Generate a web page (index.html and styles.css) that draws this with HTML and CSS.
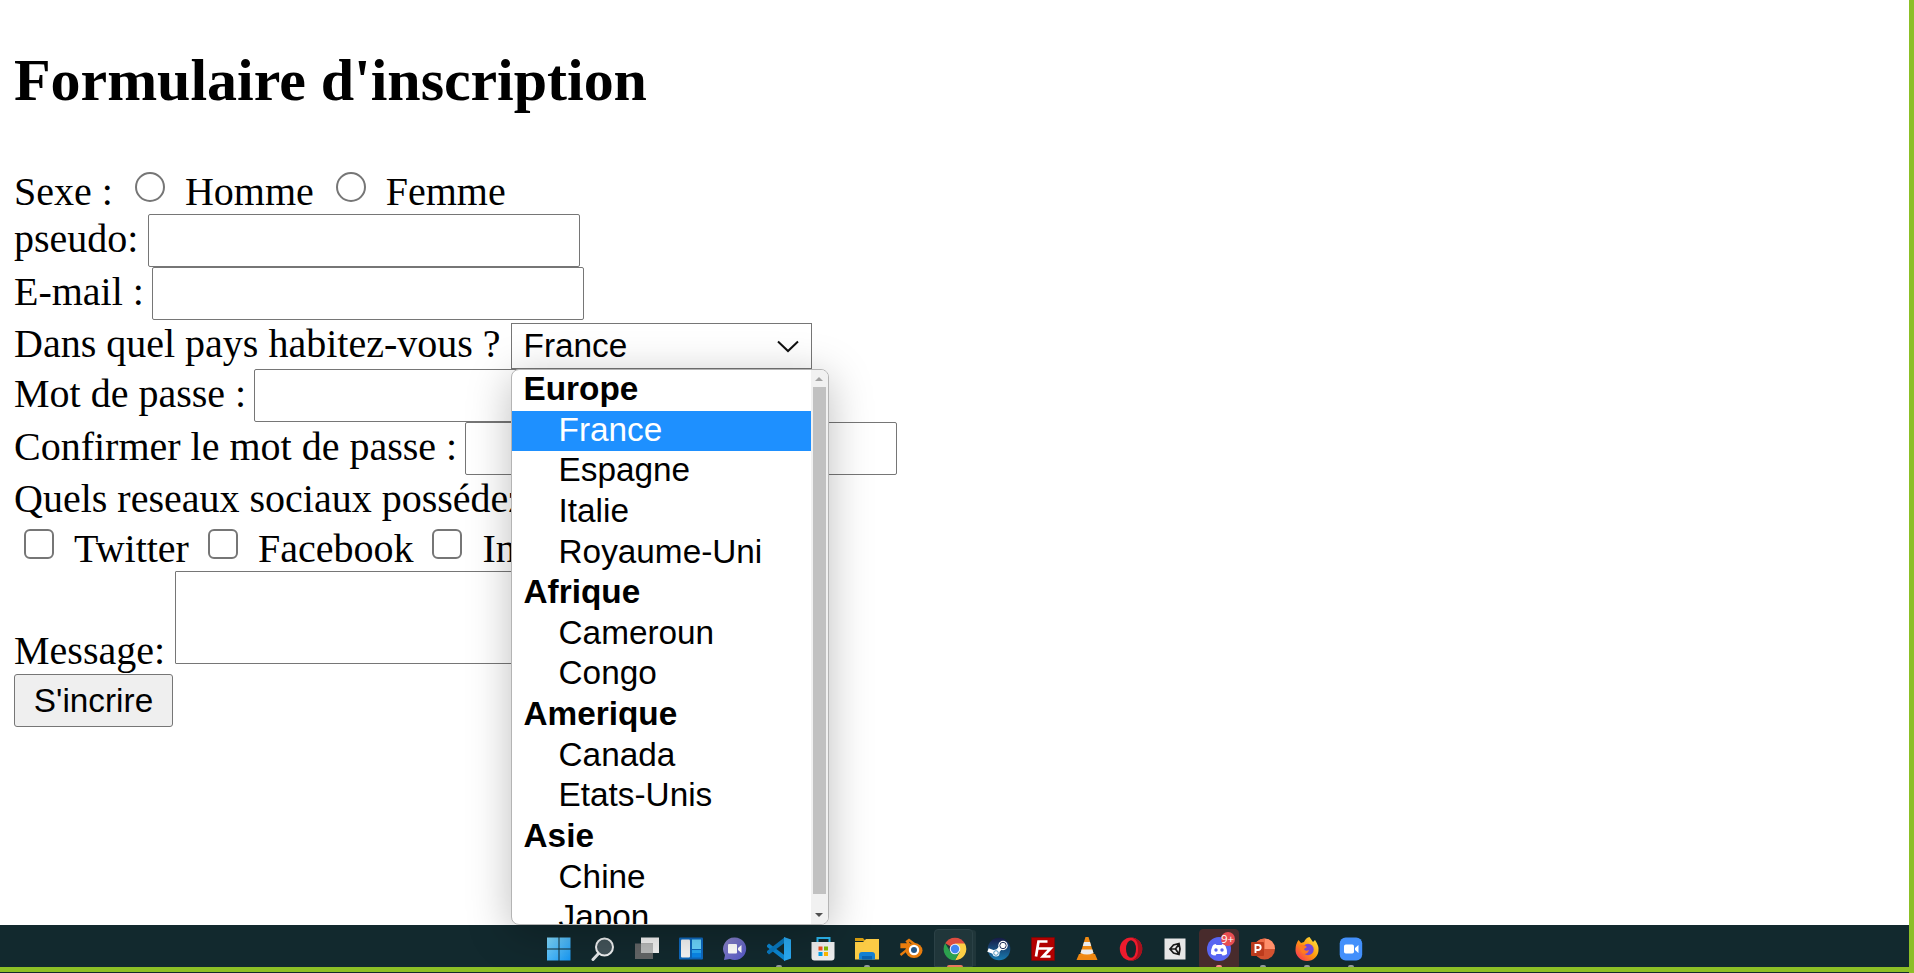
FILE: index.html
```html
<!DOCTYPE html>
<html lang="fr">
<head>
<meta charset="utf-8">
<title>Formulaire d'inscription</title>
<link rel="stylesheet" href="styles.css">
</head>
<body>
<div class="screen">
<main class="page">
  <h2 class="title">Formulaire d'inscription</h2>
  <form class="form">
    <div class="row row-sexe"><span>Sexe :</span><i class="radio"></i><span>Homme</span><i class="radio radio-next"></i><span>Femme</span></div>
    <div class="row row-input"><span>pseudo:</span><i class="field"></i></div>
    <div class="row row-input spaced"><span>E-mail :</span><i class="field"></i></div>
    <div class="row row-select"><span>Dans quel pays habitez-vous ?</span>
      <div class="select"><span>France</span>
        <svg class="chevron" width="22" height="13" viewBox="0 0 22 13"><path d="M1 1.5 11 11 21 1.5" fill="none" stroke="#111" stroke-width="2"/></svg>
        <div class="popup">
          <div class="list">
            <b>Europe</b><span class="active">France</span><span>Espagne</span><span>Italie</span><span>Royaume-Uni</span>
            <b>Afrique</b><span>Cameroun</span><span>Congo</span>
            <b>Amerique</b><span>Canada</span><span>Etats-Unis</span>
            <b>Asie</b><span>Chine</span><span>Japon</span>
          </div>
          <div class="scrollbar">
            <svg width="8" height="17" viewBox="0 0 8 17"><path d="M0 11h8L4 7z" fill="#a3a3a3"/></svg>
            <div class="thumb"></div>
            <svg width="8" height="29" viewBox="0 0 8 29"><path d="M0 19h8l-4 4z" fill="#505050"/></svg>
          </div>
        </div>
      </div>
    </div>
    <div class="row row-input spaced"><span>Mot de passe :</span><i class="field"></i></div>
    <div class="row row-input spaced"><span>Confirmer le mot de passe :</span><i class="field"></i></div>
    <div class="row row-question"><span>Quels reseaux sociaux possédez</span></div>
    <div class="row row-checks"><i class="check"></i><span>Twitter</span><i class="check"></i><span>Facebook</span><i class="check"></i><span>In</span></div>
    <div class="row row-message"><span>Message:</span><i class="area"></i></div>
    <button class="submit" type="button">S'incrire</button>
  </form>
</main>
<footer class="taskbar">
  <div class="app"><svg viewBox="0 0 24 24"><defs><linearGradient id="win" x1="0" y1="0" x2="1" y2="1"><stop offset="0" stop-color="#83dcff"/><stop offset="1" stop-color="#1597f5"/></linearGradient></defs><path d="M0 .5h11.500v11H0zM12.500.5h11v11h-11zM0 12.500h11.500v11H0zM12.500 12.500h11v11h-11z" fill="url(#win)"/></svg></div>
  <div class="app"><svg viewBox="0 0 24 24"><path d="M8 16 2 22.500" stroke="#dfe3e5" stroke-width="3" stroke-linecap="round"/><circle cx="13.500" cy="10" r="8.500" fill="#43545a" stroke="#eef0f1" stroke-width="2"/></svg></div>
  <div class="app"><svg viewBox="0 0 24 24"><path d="M6 .5h18v15.500H6z" fill="#f3f3f3"/><path d="M0 6.500h18v15.500H0z" fill="#626566"/><path d="M6 6.500h12V16H6z" fill="#b8baba"/></svg></div>
  <div class="app"><svg viewBox="0 0 24 24"><rect y=".5" width="24" height="22" rx="1" fill="#0e68bd"/><rect x="2" y="2.500" width="9" height="18" rx="1" fill="#f5f5f5"/><path d="M13 2.500h9V12h-9z" fill="#6bd5fc"/><path d="M13 13h9v3h-9z" fill="#26a7f2"/><path d="M13 16h9v4.500h-9z" fill="#0a86e8"/></svg></div>
  <div class="app"><svg viewBox="0 0 24 24"><defs><linearGradient id="chat" x1="0" y1="0" x2="1" y2="1"><stop offset="0" stop-color="#8d86c8"/><stop offset="1" stop-color="#5055c6"/></linearGradient></defs><path d="M12 .5a11.300 11.300 0 1 1-5 21.500L1 23l1-5A11.300 11.300 0 0 1 12 .5z" fill="url(#chat)"/><rect x="5" y="7" width="9" height="9.500" rx="1" fill="#fff"/><path d="m15 11 3.500-3v8L15 13z" fill="#fff"/></svg></div>
  <div class="app run"><svg viewBox="0 0 24 24"><path d="M0 8.200 2 6.500l16 12V24L0 10z" fill="#0b86d1"/><path d="m0 15.500 2 2L18 5.500V0L0 14z" fill="#0877bd"/><path d="m17 0 7 2.500v19L17 24z" fill="#29a9f2"/></svg></div>
  <div class="app"><svg viewBox="0 0 24 24"><path d="M6.500 6V1h12v5" fill="none" stroke="#2bb3ea" stroke-width="2"/><path d="M.5 5h23v15.500a3 3 0 0 1-3 3h-17a3 3 0 0 1-3-3z" fill="#eee"/><path d="M7.500 9.500h4v4h-4z" fill="#f05122"/><path d="M13 9.500h4v4h-4z" fill="#7fba00"/><path d="M7.500 15h4v4h-4z" fill="#00a3ee"/><path d="M13 15h4v4h-4z" fill="#ffb900"/></svg></div>
  <div class="app run"><svg viewBox="0 0 24 24"><path d="M0 1h8l2.500 3H0z" fill="#d39b10"/><path d="M0 5h8l3-3h13v20.500H0z" fill="#fbcb45"/><path d="M4 22.500V18a3 3 0 0 1 3-3h10a3 3 0 0 1 3 3v4.500z" fill="#1480d3"/><path d="M7 19h10v3.500H7z" fill="#0b62ae"/></svg></div>
  <div class="app"><svg viewBox="0 0 24 24"><path d="m1.500 18 10-8H2.500V7.500h8L8 4.500l2-1.500 8 6" fill="none" stroke="#e87d0d" stroke-width="2.300"/><ellipse cx="15" cy="13.500" rx="8.500" ry="7.500" fill="#e87d0d"/><circle cx="15" cy="13" r="5.200" fill="#fff"/><circle cx="15" cy="13" r="3" fill="#265787"/></svg></div>
  <div class="app chrome"><svg viewBox="0 0 24 24"><path d="M2.200 6.350A11.300 11.300 0 0 1 21.800 6.350L12 12z" fill="#dd4c40"/><path d="M12 6.500h9.900A11.300 11.300 0 0 1 12 23.300l4.700-8.600z" fill="#fdcf45"/><path d="M2.200 6.350A11.300 11.300 0 0 0 12 23.300l4.700-8.600L7.400 15z" fill="#2ca14e"/><circle cx="12" cy="12" r="5.300" fill="#e9eefb"/><circle cx="12" cy="12" r="4.200" fill="#4385f2"/></svg></div>
  <div class="app"><svg viewBox="0 0 24 24"><defs><linearGradient id="steam" x1="0" y1="0" x2="0" y2="1"><stop offset="0" stop-color="#171a45"/><stop offset="1" stop-color="#187bb1"/></linearGradient></defs><circle cx="12" cy="12" r="11.300" fill="url(#steam)"/><path d="m1 13 8 3 6-7" fill="none" stroke="#fff" stroke-width="4"/><circle cx="16" cy="8.500" r="4.700" fill="#fff"/><circle cx="16" cy="8.500" r="3.200" fill="#fff" stroke="#202f5a" stroke-width="1"/><circle cx="9" cy="16" r="3.500" fill="#fff"/><circle cx="9" cy="16" r="2.300" fill="none" stroke="#267eae" stroke-width=".8"/></svg></div>
  <div class="app"><svg viewBox="0 0 24 24"><path d="M.5.5h23v23H.5z" fill="#b20000" stroke="#820000" stroke-dasharray="1 1"/><path d="M5 19.500 7.500 4.500h9M6.500 11.500h7M11.500 11.500h8L12 19.500h7.500" fill="none" stroke="#fff" stroke-width="2.700"/></svg></div>
  <div class="app"><svg viewBox="0 0 24 24"><path d="M4 17h16l2.500 6H1.500z" fill="#ef8711"/><path d="M10.500 0h3l5.500 18q-7 4-14 0z" fill="#f18a13"/><path d="M9 5h6l1.200 4H7.800zM6.600 12.500h10.800l1.100 3.500q-6.500 3-13 0z" fill="#ececec"/></svg></div>
  <div class="app"><svg viewBox="0 0 24 24"><ellipse cx="12" cy="12" rx="11.200" ry="11.500" fill="#ed1b2d"/><path d="M12 .5a11.300 11.500 0 0 1 0 23c5-2 7-4 7-11.500S17 2 12 .5z" fill="#a8101c"/><ellipse cx="12" cy="12" rx="5" ry="8.800" fill="#12282d"/></svg></div>
  <div class="app"><svg viewBox="0 0 24 24"><path d="M1.500 1.500h21v21h-21z" fill="#e7e7e7"/><path d="m7 12 3.500-4 5.500-1.500 1 5.500-1 5.500-5.500-1.500zM7 12h5.500l3.500-5M12.500 12l3.500 5" fill="none" stroke="#181818" stroke-width="1.700"/></svg></div>
  <div class="app discord run"><svg viewBox="0 0 24 24"><circle cx="12" cy="12" r="12" fill="#5865f2"/><path d="M8.500 7Q6 7.500 5.500 9q-2 4-1.500 8 2 1.500 4.500 1.500l1-1.500h5l1 1.500q2.500 0 4.500-1.500.5-4-1.500-8-.5-1.500-3-2l-1 1h-5z" fill="#fff"/><circle cx="9" cy="13" r="1.700" fill="#5865f2"/><circle cx="15" cy="13" r="1.700" fill="#5865f2"/></svg><span class="badge">9+</span></div>
  <div class="app run"><svg viewBox="0 0 24 24"><circle cx="13.500" cy="12" r="10.500" fill="#d35230"/><path d="M13.500 1.500A10.500 10.500 0 0 1 24 12H13.500z" fill="#ff8f6b"/><path d="M3 12A10.500 10.500 0 0 1 13.500 1.500V12z" fill="#ed6c47"/><rect y="5" width="13" height="14" rx="1" fill="#bd3b1d"/><path d="M4.500 16V8h2.700a2.400 2.400 0 0 1 0 5H4.500" fill="none" stroke="#fff" stroke-width="1.900"/></svg></div>
  <div class="app run"><svg viewBox="0 0 24 24"><defs><linearGradient id="fox" x1="1" y1="0" x2="0" y2="1"><stop offset="0" stop-color="#fff044"/><stop offset=".5" stop-color="#ff980e"/><stop offset="1" stop-color="#f52063"/></linearGradient></defs><path d="M3.500 3 6 6l3-1q2-4.500 5.500-5L18 5l2-2q4 6 3.500 10a11.500 11 0 0 1-23 0Q.5 7 3.500 3z" fill="url(#fox)"/><circle cx="13" cy="12.500" r="5.700" fill="#7448d8"/><path d="M5 8q4-1 7 2l-3 2q1 3 5 1-1 4-5 4-4-1-4-9z" fill="#ff7a21"/></svg></div>
  <div class="app run"><svg viewBox="0 0 24 24"><rect x=".7" y=".5" width="22.500" height="23" rx="6" fill="#4390fb"/><rect x="5" y="7.500" width="10" height="9" rx="1.800" fill="#fff"/><path d="m16 11 3.500-3v8L16 13z" fill="#fff"/></svg></div>
</footer>
<div class="edge-bottom"></div>
</div>
</body>
</html>
```
FILE: styles.css
```css
* { box-sizing: border-box; }
body { margin: 0; background: #fff; color: #000; overflow: hidden; }
.screen {
  position: relative;
  width: 1914px;
  height: 973px;
  display: flex;
  flex-direction: column;
  border-right: 5px solid #8cbf26;
  overflow: hidden;
}
.page {
  height: 925px;
  flex: none;
  padding: 45px 0 0 14px;
  font: 40px/46px "Liberation Serif", "Times New Roman", serif;
}
.title { margin: 0 0 53px; font-size: 60px; line-height: 70px; font-weight: bold; letter-spacing: -.04px; }
.row { display: flex; align-items: flex-start; white-space: nowrap; }
.row > span { padding-top: 1px; }
.row-sexe { height: 46px; }
.row-input { height: 53px; }
.row-input > span { padding-top: 2px; }
.spaced .field { margin-left: 8px; }
.row-select { height: 49px; }
.row-question { height: 50px; }
.row-checks { height: 46px; }
.row-message { height: 103px; }
.row-message > span { padding-top: 57px; }
.field {
  width: 432px;
  height: 53px;
  margin-left: 10px;
  border: 1px solid #767676;
  border-radius: 2px;
  background: #fff;
}
.radio, .check { flex: none; width: 30px; height: 30px; border: 2px solid #767676; background: #fff; }
.radio { margin: 4px 20px 0 22px; border-radius: 50%; }
.radio-next { margin-left: 22px; }
.check { margin: 4px 20px 0 19px; border-radius: 6px; }
.check:first-child { margin-left: 10px; }
.area { width: 460px; height: 93px; margin-left: 10px; border: 1px solid #767676; border-radius: 1px; }
.submit {
  display: block;
  width: 159px;
  height: 53px;
  padding: 0;
  border: 1px solid #767676;
  border-radius: 3px;
  background: #efefef;
  color: #000;
  font: 33.333px/40px "Liberation Sans", Arial, sans-serif;
}
.select {
  position: relative;
  display: flex;
  align-items: center;
  justify-content: space-between;
  width: 301px;
  height: 46px;
  margin: 3px 0 0 10px;
  padding: 0 12px 0 12px;
  border: 1px solid #767676;
  background: #fff;
  font: 33.333px/40px "Liberation Sans", Arial, sans-serif;
}
/* Open option list, drawn over the rows that follow */
.popup {
  position: absolute;
  z-index: 2;
  top: 45px;
  left: -1px;
  width: 318px;
  height: 556px;
  display: flex;
  border: 1px solid #b4b4b4;
  border-radius: 8px;
  background: #fff;
  overflow: hidden;
  box-shadow: 0 8px 44px rgba(0, 0, 0, .26);
}
.list { width: 299px; flex: none; overflow: hidden; line-height: 38.2px; }
.list b, .list span { display: block; height: 40.63px; padding-left: 12px; }
.list span { padding-left: 47px; }
.list .active { background: #1e90ff; color: #fff; }
.scrollbar { width: 17px; display: flex; flex-direction: column; align-items: center; background: #f1f1f1; }
.thumb { width: 13px; height: 507px; background: #c1c1c1; }
.taskbar {
  height: 42px;
  flex: none;
  display: flex;
  padding-left: 537px;
  background: #12292e;
}
.app { position: relative; width: 44px; flex: none; padding: 12px 10px 0; }
.app svg { display: block; width: 24px; height: 24px; }
.run::after, .chrome::after {
  content: "";
  position: absolute;
  left: 19px;
  bottom: 0;
  width: 6px;
  height: 2px;
  border-radius: 2px 2px 0 0;
  background: #92999b;
}
.chrome::before, .discord::before {
  content: "";
  position: absolute;
  inset: 4px 4px 0 1px;
  border: 1px solid #2b4146;
  border-radius: 4px 4px 0 0;
  background: #20363a;
}
.chrome::before { box-shadow: 4px 0 0 -1px #20363a; }
.discord::before { inset: 4px 2px 0; background: #482b2c; border-color: #482b2c; }
.chrome svg, .discord svg { position: relative; }
.chrome::after { left: 14px; width: 16px; background: #e9795d; }
.discord::after { background: #ff8a8a; }
.badge {
  position: absolute;
  top: 7px;
  left: 24px;
  width: 14px;
  height: 14px;
  border-radius: 50%;
  background: #e84d52;
  color: #fff;
  font: 11.5px/13px "Open Sans", sans-serif;
  text-align: center;
  text-indent: -1px;
}
.edge-bottom { width: 1914px; height: 6px; flex: none; border-top: 5px solid #8cbf26; background: #12292e; }
```
